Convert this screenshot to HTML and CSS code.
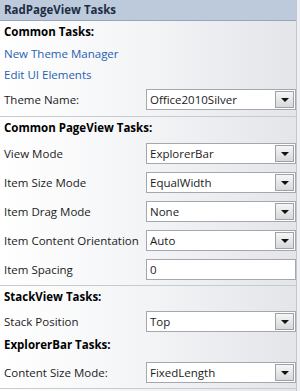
FILE: index.html
```html
<!DOCTYPE html>
<html lang="en">
<head>
  <meta charset="UTF-8">
  <title>RadPageView Tasks</title>
  <link rel="stylesheet" href="styles.css">
</head>
<body>
  <div class="panel">
    <div class="panel-title">RadPageView Tasks</div>

    <div class="section section-common">
      <div class="section-head">Common Tasks:</div>
      <a class="task-link" href="#">New Theme Manager</a>
      <a class="task-link" href="#">Edit UI Elements</a>
      <div class="row row-theme">
        <span class="label">Theme Name:</span>
        <div class="combo"><span class="value">Office2010Silver</span><span class="drop"></span></div>
      </div>
    </div>

    <div class="section">
      <div class="section-head">Common PageView Tasks:</div>
      <div class="row row-first">
        <span class="label">View Mode</span>
        <div class="combo"><span class="value">ExplorerBar</span><span class="drop"></span></div>
      </div>
      <div class="row">
        <span class="label">Item Size Mode</span>
        <div class="combo"><span class="value">EqualWidth</span><span class="drop"></span></div>
      </div>
      <div class="row">
        <span class="label">Item Drag Mode</span>
        <div class="combo"><span class="value">None</span><span class="drop"></span></div>
      </div>
      <div class="row">
        <span class="label">Item Content Orientation</span>
        <div class="combo"><span class="value">Auto</span><span class="drop"></span></div>
      </div>
      <div class="row">
        <span class="label">Item Spacing</span>
        <div class="combo text-box"><span class="value">0</span></div>
      </div>
    </div>

    <div class="section">
      <div class="section-head">StackView Tasks:</div>
      <div class="row row-stack">
        <span class="label">Stack Position</span>
        <div class="combo"><span class="value">Top</span><span class="drop"></span></div>
      </div>
      <div class="section-head sub-head">ExplorerBar Tasks:</div>
      <div class="row row-size">
        <span class="label">Content Size Mode:</span>
        <div class="combo"><span class="value">FixedLength</span><span class="drop"></span></div>
      </div>
    </div>
  </div>
</body>
</html>
```

FILE: styles.css
```css
body {
  margin: 0;
  background-color: #eef0f3;
  font-family: "Open Sans", "Noto Sans", sans-serif;
  font-size: 11.5px;
  color: #1b1b1b;
}
.panel {
  width: 296px;
  height: 391px;
  border-right: 1px solid #c3c8cf;
  background: linear-gradient(to right, #ffffff 0%, #f3f4f6 50%, #e3e5e9 100%);
  overflow: hidden;
}
.panel-title {
  height: 20px;
  line-height: 20px;
  padding-left: 4px;
  background-color: #bccadc;
  border-bottom: 1px solid #95a5bb;
  font-weight: bold;
  color: #1e2d44;
}
.section {
  border-bottom: 1px solid #c6cad1;
  padding-bottom: 5px;
}
.section-common {
  padding-bottom: 6px;
}
.section-head {
  height: 22px;
  line-height: 22px;
  padding-left: 4px;
  font-weight: bold;
  color: #000;
}
.task-link {
  display: block;
  height: 21px;
  line-height: 21px;
  padding-left: 4px;
  color: #1f5fb0;
  text-decoration: none;
}
.row {
  display: flex;
  align-items: center;
  height: 21px;
  margin-top: 8px;
}
.row-theme { margin-top: 4px; }
.row-first { margin-top: 4px; }
.row-stack { margin-top: 3px; }
.row-size { margin-top: 6px; }
.sub-head { margin-top: 2px; }
.label {
  width: 142px;
  padding-left: 4px;
  white-space: nowrap;
}
.combo {
  flex: 1;
  display: flex;
  align-items: center;
  height: 19px;
  border: 1px solid #a4a8ae;
  background-color: #fff;
}
.value {
  flex: 1;
  padding-left: 3px;
  white-space: nowrap;
}
.drop {
  position: relative;
  width: 17px;
  height: 15px;
  margin-right: 1px;
  border: 1px solid #9ea2a8;
  background: linear-gradient(to bottom, #f6f6f6, #d7d8da);
}
.drop::after {
  content: "";
  position: absolute;
  left: 5px;
  top: 6px;
  border-left: 4px solid transparent;
  border-right: 4px solid transparent;
  border-top: 4px solid #111;
}
```
